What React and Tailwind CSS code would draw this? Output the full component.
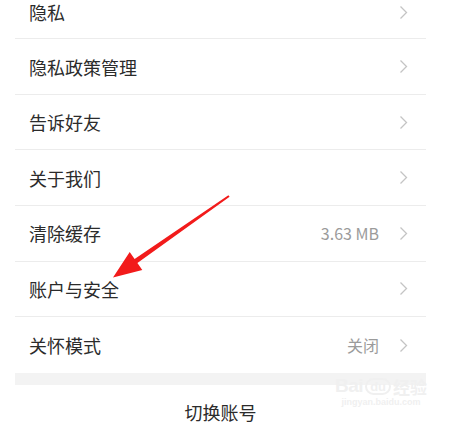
const rows = [
  { label: '隐私', first: true },
  { label: '隐私政策管理' },
  { label: '告诉好友' },
  { label: '关于我们' },
  { label: '清除缓存', value: '3.63 MB' },
  { label: '账户与安全' },
  { label: '关怀模式', value: '关闭', last: true },
];

const Chevron = () => (
  <svg width="9" height="15" viewBox="0 0 9 15" className="shrink-0">
    <polyline points="1.5,1.5 7.5,7.5 1.5,13.5" fill="none" stroke="#c4c4c4" strokeWidth="1.3" />
  </svg>
);

const RedArrow = () => (
  <svg
    className="absolute left-0 top-0 pointer-events-none"
    width="453"
    height="430"
    viewBox="0 0 453 430"
  >
    <polygon
      points="228.4,195.2 229.6,196.8 137.4,263.1 142.3,270 113,277.5 129.7,252 134.6,258.9"
      fill="#f21b1b"
    />
  </svg>
);

const Watermark = () => (
  <div className="absolute left-[335px] top-[376px] flex flex-col items-center pointer-events-none select-none">
    <div className="flex items-end gap-[2px] leading-none">
      <span className="text-[19px] font-bold text-[#f0f0f0] [font-family:'Liberation_Sans',sans-serif] tracking-tight">Bai</span>
      <span className="rounded-full border-2 border-[#f0f0f0] px-[3px] text-[13px] font-bold text-[#f0f0f0] [font-family:'Liberation_Sans',sans-serif]">du</span>
      <span className="text-[17px] font-bold text-[#f0f0f0] [font-family:'Noto_Sans_CJK_SC',sans-serif]">经验</span>
    </div>
    <div className="mt-[3px] text-[9px] font-bold leading-none text-[#f0f0f0] [font-family:'Liberation_Sans',sans-serif]">
      jingyan.baidu.com
    </div>
  </div>
);

export default function App() {
  return (
    <div className="relative h-[430px] w-[453px] overflow-hidden bg-white [font-family:'Noto_Sans_CJK_SC','Noto_Sans',sans-serif]">
      <div className="mx-[15px] w-[411px]">
        {rows.map((r) => (
          <div
            key={r.label}
            className={`flex items-center pl-[14px] pr-[18px] ${r.first ? 'h-[39.3px] pb-[14.3px]' : 'h-[55.6px]'} ${r.last ? '' : 'border-b border-[#ececec]'}`}
          >
            <span className="flex-1 text-[18px] leading-[22px] text-[#2b2b2b]">{r.label}</span>
            {r.value && <span className="mr-[20px] text-[16px] leading-[22px] text-[#9b9b9b]">{r.value}</span>}
            <Chevron />
          </div>
        ))}
        <div className="h-[12.5px] bg-[#f3f3f3]" />
        <div className="flex h-[55px] items-center justify-center text-[18px] text-[#2b2b2b]">切换账号</div>
      </div>
      <Watermark />
      <RedArrow />
    </div>
  );
}
